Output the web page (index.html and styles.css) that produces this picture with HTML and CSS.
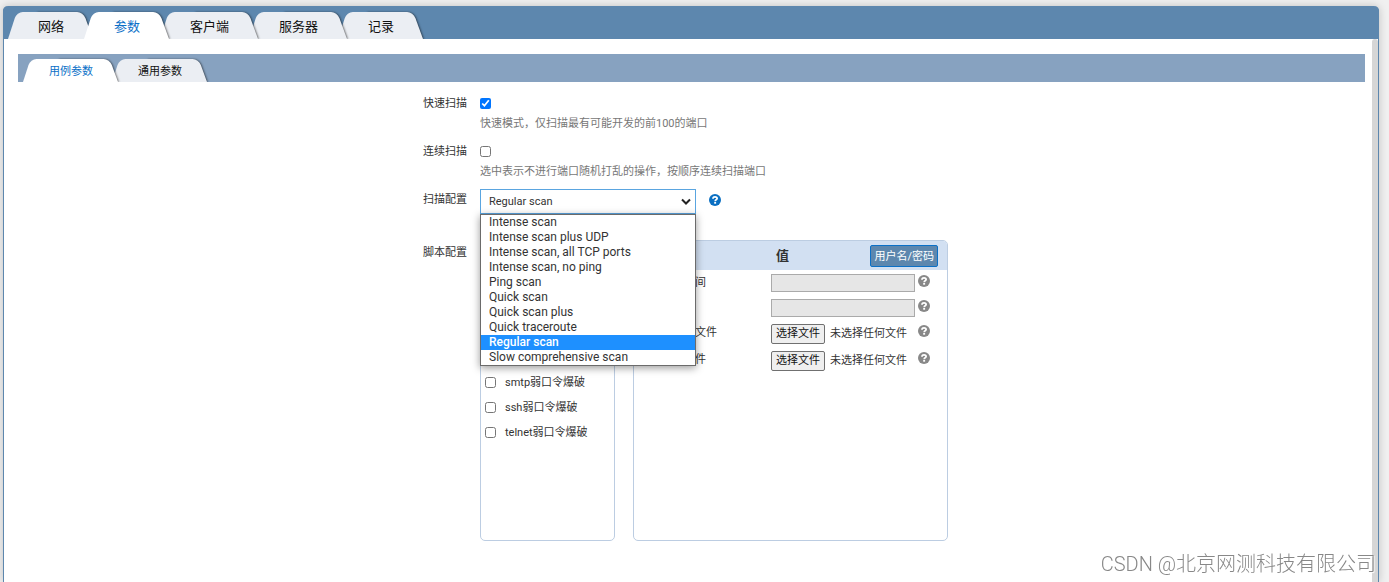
FILE: index.html
```html
<!DOCTYPE html>
<html lang="zh-CN">
<head>
<meta charset="utf-8">
<title>参数</title>
<link rel="stylesheet" href="styles.css">
</head>
<body>
<svg class="sprite" aria-hidden="true">
  <symbol id="help" viewBox="0 0 12 12">
    <circle cx="6" cy="6" r="6" fill="currentColor"/>
    <path d="M4 4.700C4 3.400 4.900 2.800 6 2.800s2.100.7 2.100 1.800C8.100 5.900 6.200 5.800 6.200 7.200" fill="none" stroke="#fff" stroke-width="1.800"/>
    <rect x="5.200" y="8" width="1.900" height="1.700" fill="#fff"/>
  </symbol>
</svg>
<main class="window">
  <nav class="tabs tabs-main">
    <a class="tab" href="#network">网络</a>
    <a class="tab active" href="#params">参数</a>
    <a class="tab" href="#client">客户端</a>
    <a class="tab" href="#server">服务器</a>
    <a class="tab" href="#log">记录</a>
  </nav>
  <div class="body">
    <div class="content">
      <nav class="tabs tabs-sub">
        <a class="tab active" href="#case">用例参数</a>
        <a class="tab" href="#common">通用参数</a>
      </nav>
      <form class="form">
        <label class="name" for="fast">快速扫描</label>
        <div class="field">
          <div class="line"><input class="check" type="checkbox" id="fast" checked></div>
          <p class="hint">快速模式，仅扫描最有可能开发的前100的端口</p>
        </div>
        <label class="name" for="seq">连续扫描</label>
        <div class="field">
          <div class="line"><input class="check" type="checkbox" id="seq"></div>
          <p class="hint">选中表示不进行端口随机打乱的操作，按顺序连续扫描端口</p>
        </div>
        <label class="name" for="profile">扫描配置</label>
        <div class="field picker">
          <div class="select-wrap">
            <select class="select" id="profile"><option>Regular scan</option></select>
            <svg class="arrow" viewBox="0 0 10 6"><path d="M1 1l4 4 4-4" fill="none" stroke="#222" stroke-width="2"/></svg>
            <ul class="options" role="listbox" aria-label="扫描配置">
              <li role="option">Intense scan</li>
              <li role="option">Intense scan plus UDP</li>
              <li role="option">Intense scan, all TCP ports</li>
              <li role="option">Intense scan, no ping</li>
              <li role="option">Ping scan</li>
              <li role="option">Quick scan</li>
              <li role="option">Quick scan plus</li>
              <li role="option">Quick traceroute</li>
              <li role="option" class="selected" aria-selected="true">Regular scan</li>
              <li role="option">Slow comprehensive scan</li>
            </ul>
          </div>
          <svg class="help blue"><use href="#help"/></svg>
        </div>
        <span class="name name-panels">脚本配置</span>
        <div class="field panels">
          <div class="panel scripts">
            <label class="script"><input class="check" type="checkbox">smtp弱口令爆破</label>
            <label class="script"><input class="check" type="checkbox">ssh弱口令爆破</label>
            <label class="script"><input class="check" type="checkbox">telnet弱口令爆破</label>
          </div>
          <div class="panel args">
            <div class="panel-head">
              <span class="value-title">值</span>
              <button class="account" type="button">用户名/密码</button>
            </div>
            <div class="arg">
              <label for="timeout">间</label>
              <input class="text" id="timeout" type="text" disabled>
              <svg class="help"><use href="#help"/></svg>
            </div>
            <div class="arg">
              <label for="threads"></label>
              <input class="text" id="threads" type="text" disabled>
              <svg class="help"><use href="#help"/></svg>
            </div>
            <div class="arg file">
              <label for="userfile">文件</label>
              <div class="upload"><button class="choose" id="userfile" type="button">选择文件</button><span>未选择任何文件</span></div>
              <svg class="help"><use href="#help"/></svg>
            </div>
            <div class="arg file">
              <label for="passfile">件</label>
              <div class="upload"><button class="choose" id="passfile" type="button">选择文件</button><span>未选择任何文件</span></div>
              <svg class="help"><use href="#help"/></svg>
            </div>
          </div>
        </div>
      </form>
    </div>
    <div class="scrollbar"></div>
  </div>
</main>
<div class="watermark">CSDN @北京网测科技有限公司</div>
</body>
</html>
```
FILE: styles.css
```css
* { box-sizing: border-box; }

body {
  margin: 0;
  padding: 6px 10px 0 3px;
  height: 100vh;
  overflow: hidden;
  background: #f0f0f0;
  color: #333;
  font: 11px/16px Roboto, "Noto Sans CJK SC", sans-serif;
}

button, input, select { font: inherit; }

.sprite { position: absolute; width: 0; height: 0; }

.window {
  display: flex;
  flex-direction: column;
  height: 100%;
  border: 1px solid #5d87ae;
  border-width: 0 1px;
  border-radius: 5px 5px 0 0;
  background: #fff;
  box-shadow: 0 0 8px rgba(0, 0, 0, 0.2);
}

/* Tab strips */
.tabs { display: flex; align-items: flex-end; overflow: hidden; flex: none; }

.tabs-main {
  height: 33px;
  margin: 0 -1px;
  padding-left: 5px;
  background: #5d87ae;
  border-radius: 5px 5px 0 0;
  font-size: 13px;
}

.tabs-sub { height: 28px; padding-left: 5px; background: #87a2c0; }

.tab {
  position: relative;
  z-index: 1;
  isolation: isolate;
  height: 27px;
  padding: 0 29px 0 30px;
  margin-right: -9px;
  line-height: 29px;
  color: #111;
  text-decoration: none;
}

.tab:nth-child(1) { z-index: 5; }
.tab:nth-child(2) { z-index: 4; }
.tab:nth-child(3) { z-index: 3; }
.tab:nth-child(4) { z-index: 2; }

.tab::before, .tab::after {
  content: "";
  position: absolute;
  top: 0;
  bottom: 0;
  background: #ebeef3;
}

.tab::before {
  z-index: -1;
  left: 0;
  right: 45%;
  border-top-left-radius: 6px;
  transform: skewX(-18deg);
  transform-origin: left bottom;
}

.tab::after {
  z-index: -2;
  left: 45%;
  right: 0;
  border-top-right-radius: 6px;
  box-shadow: 1px 0 2px rgba(0, 0, 0, 0.5);
  transform: skewX(20deg);
  transform-origin: right bottom;
}

.tab.active { z-index: 6; color: #0b70c7; }
.tab.active::before, .tab.active::after { background: #fff; }

.tabs-sub .tab { height: 23px; padding: 0 25px 0 26px; margin-right: -6px; line-height: 26px; }

/* Page body */
.body { display: flex; flex: 1; min-height: 0; }
.content { flex: 1; padding: 15px 7px 0 14px; }
.scrollbar { width: 6px; background: #d6d6d6; border-radius: 3px 3px 0 0; }

.form {
  display: grid;
  grid-template-columns: 1fr 2fr;
  padding-top: 13px;
}

.name { padding-top: 1px; text-align: right; }
.name-panels { padding-top: 5px; }
.field { padding-left: 13px; }
.line { display: flex; align-items: center; height: 17px; }
.check { width: 11px; height: 11px; margin: 0; flex: none; }
.hint { margin: 4px 0 11px; color: #777; }

.picker { display: flex; gap: 13px; margin-top: -2px; padding-bottom: 26px; }
.select-wrap { position: relative; width: 216px; }

.select {
  display: block;
  width: 100%;
  height: 25px;
  padding: 0 8px;
  border: 1px solid #5aa5e0;
  border-radius: 0;
  background: #fff;
  color: #333;
  appearance: none;
}

.arrow { position: absolute; top: 9px; right: 5px; width: 10px; height: 7px; }

.options {
  position: absolute;
  z-index: 10;
  top: 25px;
  left: 0;
  right: 0;
  margin: 0;
  padding: 0;
  list-style: none;
  border: 1px solid #6b6b6b;
  background: #fff;
  font-size: 12px;
  line-height: 15px;
  box-shadow: 0 2px 8px rgba(0, 0, 0, 0.4);
}

.options li { padding: 0 8px; }
.options .selected { background: #1e90ff; color: #fff; font-weight: 500; }

.help { width: 12px; height: 12px; color: #888; flex: none; }
.help.blue { margin-top: 5px; color: #0a6fc2; }

/* Script panels */
.panels { display: flex; gap: 18px; }
.panels > .panel { height: 301px; }

.panel { border: 1px solid #bccde2; border-radius: 5px; background: #fff; overflow: hidden; }
.scripts { width: 135px; padding-top: 129px; }
.args { width: 315px; }

.panel-head {
  display: flex;
  align-items: center;
  justify-content: space-between;
  height: 29px;
  padding: 0 9px 0 142px;
  background: #d2e0f2;
  font-size: 13px;
  font-weight: 700;
}

.account {
  height: 22px;
  padding: 2px 3px 0;
  border: 1px solid #0b70c7;
  border-radius: 2px;
  background: #5d87ae;
  color: #fff;
  font-size: 11px;
  font-weight: 400;
}

.script { display: flex; align-items: center; gap: 9px; height: 25px; padding-left: 4px; }

.arg {
  display: grid;
  grid-template-columns: 131px 144px auto;
  justify-content: start;
  height: 25px;
  padding: 3px 0 0 6px;
}

.arg label { padding: 2px 0 0 55px; }
.arg .help { margin: 2px 0 0 3px; }
.text { width: 144px; height: 18px; margin-top: 1px; border: 1px solid #aaa; background: #e6e6e6; }
.file { height: 27px; }
.upload { display: flex; align-items: center; gap: 5px; height: 22px; white-space: nowrap; }

.choose {
  height: 20px;
  padding: 0 4px;
  border: 1px solid #707070;
  border-radius: 2px;
  background: #efefef;
  color: #111;
}

.watermark {
  position: fixed;
  right: 13px;
  bottom: 3px;
  color: #888;
  font-size: 20px;
  font-weight: 300;
  line-height: 30px;
  text-shadow: 1px 1px 1px #fff;
}
```
